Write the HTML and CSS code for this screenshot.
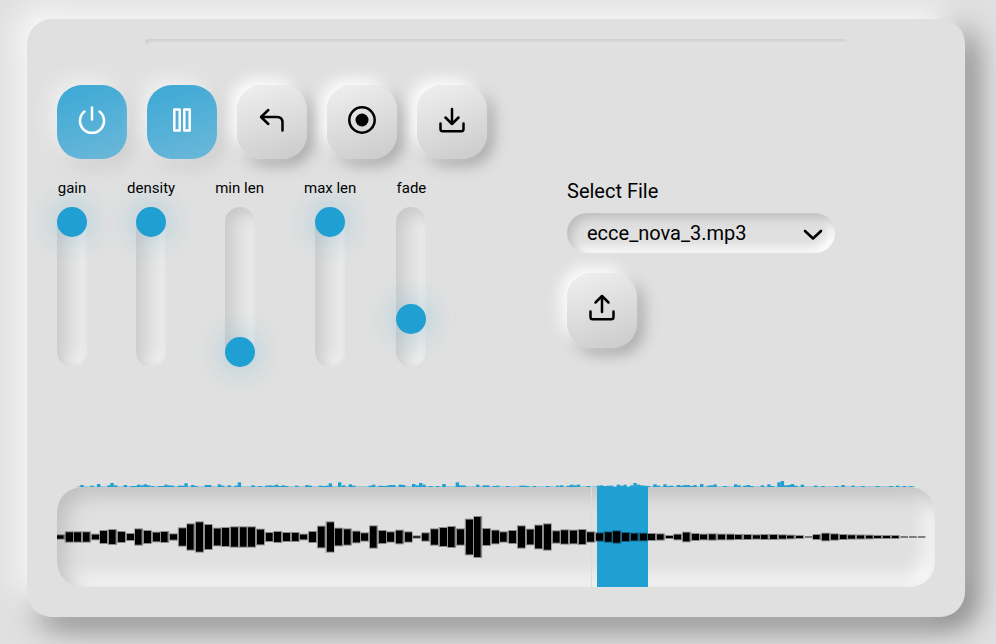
FILE: index.html
```html
<!DOCTYPE html>
<html lang="en">
<head>
<meta charset="utf-8">
<title>Granular player</title>
<link rel="stylesheet" href="styles.css">
</head>
<body>
<main class="panel">
  <div class="meter"></div>
  <div class="toolbar">
    <button class="btn on" aria-label="Power"><svg width="32" height="32" viewBox="0 0 32 32"><path d="M16 3.500V15.500M8.500 7.500A12 12 0 1 0 23.500 7.500"/></svg></button>
    <button class="btn on" aria-label="Pause"><svg width="32" height="32" viewBox="0 0 32 32"><path d="M8.300 5.500H13.700V26.500H8.300ZM18.300 5.500H23.700V26.500H18.300Z"/></svg></button>
    <button class="btn" aria-label="Undo"><svg width="32" height="32" viewBox="0 0 32 32"><path d="M12.300 6L5 13L12.300 20M5 13H21Q26.500 13 26.500 18.500V26.500"/></svg></button>
    <button class="btn" aria-label="Record"><svg width="32" height="32" viewBox="0 0 32 32"><circle cx="16" cy="16" r="12.700"/><circle class="solid" cx="16" cy="16" r="6.500"/></svg></button>
    <button class="btn" aria-label="Download"><svg width="32" height="32" viewBox="0 0 32 32"><path d="M16 5V20M9.500 13.500L16 20L22.500 13.500M4.500 19.500V25Q4.500 27.300 6.800 27.300H25.200Q27.500 27.300 27.500 25V19.500"/></svg></button>
  </div>
  <div class="controls">
    <div class="sliders">
      <div class="slider"><span>gain</span><div class="track top"><i></i></div></div>
      <div class="slider"><span>density</span><div class="track top"><i></i></div></div>
      <div class="slider"><span>min len</span><div class="track bottom"><i></i></div></div>
      <div class="slider"><span>max len</span><div class="track top"><i></i></div></div>
      <div class="slider"><span>fade</span><div class="track low"><i></i></div></div>
    </div>
    <div class="file">
      <label>Select File</label>
      <div class="select"><span>ecce_nova_3.mp3</span><svg width="20" height="13" viewBox="0 0 20 13"><path d="M2 2L10 9.500L18 2"/></svg></div>
      <button class="btn upload" aria-label="Upload"><svg width="32" height="32" viewBox="0 0 32 32"><path d="M16 20V4M9.500 10.500L16 4L22.500 10.500M4.500 19.500V25Q4.500 27.300 6.800 27.300H25.200Q27.500 27.300 27.500 25V19.500"/></svg></button>
    </div>
  </div>
  <div class="wave">
    <svg id="grains" class="grains" width="878" height="8" viewBox="0 0 878 8"></svg>
    <svg id="bars" width="878" height="100" viewBox="0 0 878 100"><path class="line" d="M534.500 0V100"/><rect class="region" x="540" y="0" width="51" height="100"/></svg>
  </div>
</main>
<script src="wave.js"></script>
</body>
</html>
```
FILE: styles.css
```css
* { box-sizing: border-box; }
body {
  margin: 0;
  height: 644px;
  padding: 19px 31px 0 27px;
  overflow: hidden;
  background: #e0e0e0;
  font-family: Roboto, sans-serif;
  color: #000;
}
.panel {
  height: 598px;
  padding: 20px 30px 30px;
  border-radius: 25px;
  background: #e0e0e0;
  box-shadow: -10px -10px 30px #fff, 10px 10px 30px #727272;
  display: flex;
  flex-direction: column;
}
.meter {
  width: 80%;
  height: 6px;
  flex: none;
  align-self: center;
  border-radius: 3px;
  box-shadow: inset 2px 2px 5px #cbcbcb, inset -2px -2px 5px #efefef;
}
.toolbar { display: flex; gap: 20px; margin-top: 40px; }
.btn {
  width: 70px;
  height: 74px;
  flex: none;
  padding: 0 0 4px;
  border: 0;
  border-radius: 25px;
  display: flex;
  align-items: center;
  justify-content: center;
  color: #000;
  background: linear-gradient(160deg, #f0f0f0, #cacaca);
  box-shadow: -6px -6px 15px #fff, 6px 6px 15px #a4a4a4;
}
.btn.on {
  color: #fff;
  background: linear-gradient(160deg, #3ba8d5, #6cb8d9);
  box-shadow: -5px -5px 20px #f5f5f5, 5px 5px 20px #c4c4c4;
}
.btn svg { fill: none; stroke: currentColor; stroke-width: 2.5; stroke-linecap: round; stroke-linejoin: round; }
.btn .solid { fill: currentColor; stroke: none; }
.controls { display: flex; height: 190px; margin-top: 20px; }
.sliders { width: 510px; display: flex; gap: 40.07px; }
.slider { display: flex; flex-direction: column; align-items: center; font-size: 15px; line-height: 18px; white-space: nowrap; }
.track {
  width: 30px;
  height: 160px;
  margin-top: 10px;
  border-radius: 15px;
  box-shadow: inset 5px 5px 15px #c5c5c5, inset -5px -5px 15px #f6f6f6;
}
.track i { display: block; width: 30px; height: 30px; border-radius: 50%; background: #209fd3; box-shadow: 0 0 30px rgba(32, 159, 211, .4); }
.track.bottom { padding-top: 130px; }
.track.low { padding-top: 97px; }
.file { font-size: 20px; }
.file label { display: block; line-height: 24px; }
.select {
  width: 268px;
  height: 40px;
  margin-top: 10px;
  padding: 0 12px 0 20px;
  border-radius: 20px;
  display: flex;
  align-items: center;
  justify-content: space-between;
  box-shadow: inset 5px 5px 10px #bebebe, inset -5px -5px 10px #fff;
}
.select svg { margin-top: 4px; fill: none; stroke: #000; stroke-width: 2.6; stroke-linecap: round; stroke-linejoin: round; }
.upload { height: 75px; margin-top: 20px; padding-bottom: 5px; }
.wave {
  position: relative;
  height: 100px;
  margin-top: auto;
  border-radius: 25px;
  box-shadow: inset 8px 8px 20px #bebebe, inset -8px -8px 20px #fff;
}
.wave svg { display: block; }
.grains { position: absolute; left: 0; top: -8px; fill: #209fd3; }
.region { fill: #209fd3; }
.line { stroke: #d8dddd; stroke-width: 1; fill: none; }
.soft { fill: rgba(0, 0, 0, .38); }
.quiet { fill: rgba(0, 0, 0, .45); }
```
FILE: wave.js
```javascript
const NS = "http://www.w3.org/2000/svg";
function rect(parent, x, y, w, h, cls, opacity) {
  const r = document.createElementNS(NS, "rect");
  r.setAttribute("x", x);
  r.setAttribute("y", y);
  r.setAttribute("width", w);
  r.setAttribute("height", h);
  if (cls) r.setAttribute("class", cls);
  if (opacity) r.setAttribute("opacity", opacity);
  parent.appendChild(r);
}

// Peak heights of the waveform, in thirds of a pixel.
const peaks = [
  10,28,28,28,14,36,42,30,18,46,36,26,30,16,52,76,88,72,50,54,58,58,58,44,24,
  30,24,24,14,30,62,88,50,46,32,22,64,36,28,38,28,4,22,46,54,60,46,104,120,48,
  38,28,36,64,44,68,76,34,40,38,42,28,22,28,34,24,20,20,18,16,6,14,26,18,14,
  16,14,14,12,12,10,12,12,10,8,6,0,12,20,16,12,10,9,8,6,6,6,0,0,0
];
const bars = document.getElementById("bars");
peaks.forEach((p, i) => {
  const x = i * 8.695;
  const h = p / 3;
  if (!h) {
    rect(bars, x, 49, 7.6, 2, "quiet");
    return;
  }
  rect(bars, Math.max(0, x - 0.9), 50 - h / 2 - 1, 8.695, h + 2, "soft");
  rect(bars, Math.round(x), 50 - h / 2, i % 3 ? 7 : 6.6, h);
});

// Grain counts: [start, height] pairs, in thirds of a pixel.
const grains = [
  13,6,43,4,63,9,94,5,103,12,114,5,143,6,163,3,173,3,183,7,193,5,203,8,213,5,
  225,3,245,3,255,3,265,7,275,5,285,4,305,4,315,4,325,11,345,6,355,3,386,6,
  396,6,425,8,435,4,455,5,475,4,485,14,526,5,547,3,567,4,577,5,587,4,597,7,
  607,3,617,5,627,3,657,4,688,6,698,4,728,4,738,3,748,4,758,11,786,14,798,5,
  818,8,828,4,
  878,4,888,7,908,4,918,3,928,4,938,6,948,6,968,7,978,6,1008,9,1018,5,1029,12,
  1039,7,1059,3,1080,3,1099,9,1139,14,1149,5,1159,5,1200,7,1220,5,1230,5,
  1250,3,1260,4,1290,3,1330,4,1340,4,1350,3,1370,3,1410,3,1440,4,1452,5,
  1472,4,1482,7,1492,5,1502,7,1532,3,1562,4,1572,5,1582,3,1592,4,1602,4,
  1622,7,1632,4,1642,7,1662,5,1672,12,
  1682,7,1692,5,1702,4,1712,3,1732,8,1742,4,1762,8,1772,3,1782,4,1802,6,
  1812,4,1822,6,1832,6,1842,3,1852,6,1872,9,1892,4,1902,5,1912,8,1942,3,
  1974,8,1984,5,2002,4,2012,6,2022,3,2054,5,2074,8,2084,3,2104,14,2114,18,
  2124,5,2134,6,2144,9,2154,4,2174,7,2214,4,2236,3,2276,3,2296,6,2326,4,
  2356,3,2400,3,2440,3,2460,4,2480,3,2500,3
];
const grainSvg = document.getElementById("grains");
rect(grainSvg, 20, 7, 838, 1, "", 0.35);
for (let i = 0; i < grains.length; i += 2) {
  const h = Math.max(1, grains[i + 1] / 3);
  rect(grainSvg, 19 + grains[i] / 3, 8 - h, 3.4, h);
}
```
